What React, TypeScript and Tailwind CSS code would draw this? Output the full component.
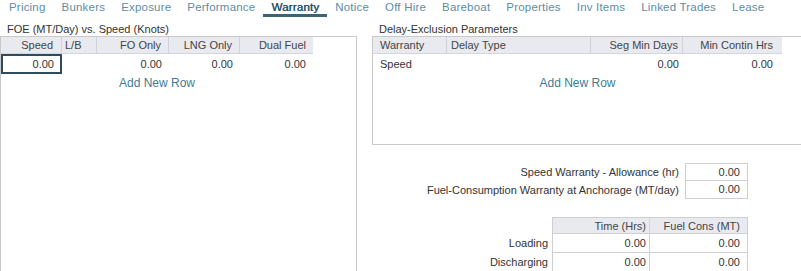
import type { ReactNode } from 'react';

const TABS = [
  'Pricing',
  'Bunkers',
  'Exposure',
  'Performance',
  'Warranty',
  'Notice',
  'Off Hire',
  'Bareboat',
  'Properties',
  'Inv Items',
  'Linked Trades',
  'Lease',
];

function HeadCell({ children, className = '' }: { children?: ReactNode; className?: string }) {
  return (
    <div className={`h-[16px] leading-[16px] border-r border-[#cfd2da] text-[#444] truncate ${className}`}>
      {children}
    </div>
  );
}

function FoeTable() {
  return (
    <div className="w-[357px] h-[240px] border border-[#c9c9c9] border-b-0">
      <div className="grid grid-cols-[61px_35px_72px_71px_73px] bg-[#e8eaf0] w-[312px] border-b border-[#d3d6de]">
        <HeadCell className="text-right pr-[8px]">Speed</HeadCell>
        <HeadCell className="pl-[3px]">L/B</HeadCell>
        <HeadCell className="text-right pr-[7px]">FO Only</HeadCell>
        <HeadCell className="text-right pr-[7px]">LNG Only</HeadCell>
        <HeadCell className="text-right pr-[7px] border-r-0">Dual Fuel</HeadCell>
      </div>
      <div className="grid grid-cols-[61px_35px_72px_71px_73px] w-[312px] h-[20px] leading-[16px]">
        <div className="border-2 border-[#2e4c5d] text-right pr-[6px]">0.00</div>
        <div />
        <div className="text-right pr-[7px] pt-[2px]">0.00</div>
        <div className="text-right pr-[7px] pt-[2px]">0.00</div>
        <div className="text-right pr-[7px] pt-[2px]">0.00</div>
      </div>
      <div className="w-[312px] text-center text-[#3f7c92] text-[12px] leading-[14px] mt-[2px]">Add New Row</div>
    </div>
  );
}

function DelayTable() {
  return (
    <div className="h-[109px] border border-[#c9c9c9] border-r-0">
      <div className="grid grid-cols-[74px_144px_92px_99px] bg-[#e8eaf0] w-[409px] border-b border-[#d3d6de]">
        <HeadCell className="pl-[7px]">Warranty</HeadCell>
        <HeadCell className="pl-[4px]">Delay Type</HeadCell>
        <HeadCell className="text-right pr-[4px]">Seg Min Days</HeadCell>
        <HeadCell className="text-right pr-[9px] border-r-0">Min Contin Hrs</HeadCell>
      </div>
      <div className="grid grid-cols-[74px_144px_92px_99px] w-[409px] h-[20px] leading-[16px] pt-[2px]">
        <div className="pl-[7px]">Speed</div>
        <div />
        <div className="text-right pr-[4px]">0.00</div>
        <div className="text-right pr-[9px]">0.00</div>
      </div>
      <div className="w-[409px] text-center text-[#3f7c92] text-[12px] leading-[14px] mt-[2px]">Add New Row</div>
    </div>
  );
}

function WarrantyFields() {
  const rows = ['Speed Warranty - Allowance (hr)', 'Fuel-Consumption Warranty at Anchorage (MT/day)'];
  return (
    <div className="flex flex-col items-end">
      {rows.map((label, i) => (
        <div key={label} className="flex items-stretch h-[18px]">
          <div className="pr-[6px] leading-[18px]">{label}</div>
          <div
            className={`w-[63px] border border-[#cfcfcf] text-right pr-[7px] leading-[16px] ${i > 0 ? 'border-t-0 h-[18px] leading-[17px]' : ''}`}
          >
            0.00
          </div>
        </div>
      ))}
    </div>
  );
}

function PortTable() {
  const rows = ['Loading', 'Discharging'];
  return (
    <div className="grid grid-cols-[auto_98px_98px]">
      <div />
      <div className="h-[17px] leading-[16px] bg-[#e8eaf0] border border-[#cfcfcf] border-r-[#d3d6de] text-right pr-[3px] text-[#444]">
        Time (Hrs)
      </div>
      <div className="h-[17px] leading-[16px] bg-[#e8eaf0] border border-l-0 border-[#cfcfcf] text-right pr-[7px] text-[#444]">
        Fuel Cons (MT)
      </div>
      {rows.map((label) => (
        <div key={label} className="contents">
          <div className="h-[19px] leading-[19px] text-right pr-[4px]">{label}</div>
          <div className="h-[19px] leading-[18px] border border-t-0 border-[#cfcfcf] text-right pr-[3px]">0.00</div>
          <div className="h-[19px] leading-[18px] border border-t-0 border-l-0 border-[#cfcfcf] text-right pr-[7px]">
            0.00
          </div>
        </div>
      ))}
    </div>
  );
}

export default function App() {
  return (
    <div
      className="w-[801px] h-[271px] overflow-hidden bg-white text-[11px] text-[#333]"
      style={{ fontFamily: '"Liberation Sans", Arial, sans-serif' }}
    >
      <div className="flex pl-[1px] h-[17px] text-[11.5px] tracking-[0.2px]">
        {TABS.map((t) => (
          <div
            key={t}
            className={
              t === 'Warranty'
                ? 'px-[8px] leading-[14px] text-[#2c5366] [text-shadow:0.4px_0_0_#2c5366] border-b-[3px] border-[#3a6376]'
                : 'px-[8px] leading-[14px] text-[#5e8ea2]'
            }
          >
            {t}
          </div>
        ))}
      </div>

      <div className="flex mt-[5px]">
        <div className="w-[372px] shrink-0">
          <div className="pl-[7px] leading-[14px]">FOE (MT/Day) vs. Speed (Knots)</div>
          <FoeTable />
        </div>
        <div className="flex-1">
          <div className="pl-[7px] leading-[14px]">Delay-Exclusion Parameters</div>
          <DelayTable />
          <div className="pr-[53px] mt-[18px]">
            <WarrantyFields />
            <div className="flex justify-end mt-[18px]">
              <PortTable />
            </div>
          </div>
        </div>
      </div>
    </div>
  );
}
